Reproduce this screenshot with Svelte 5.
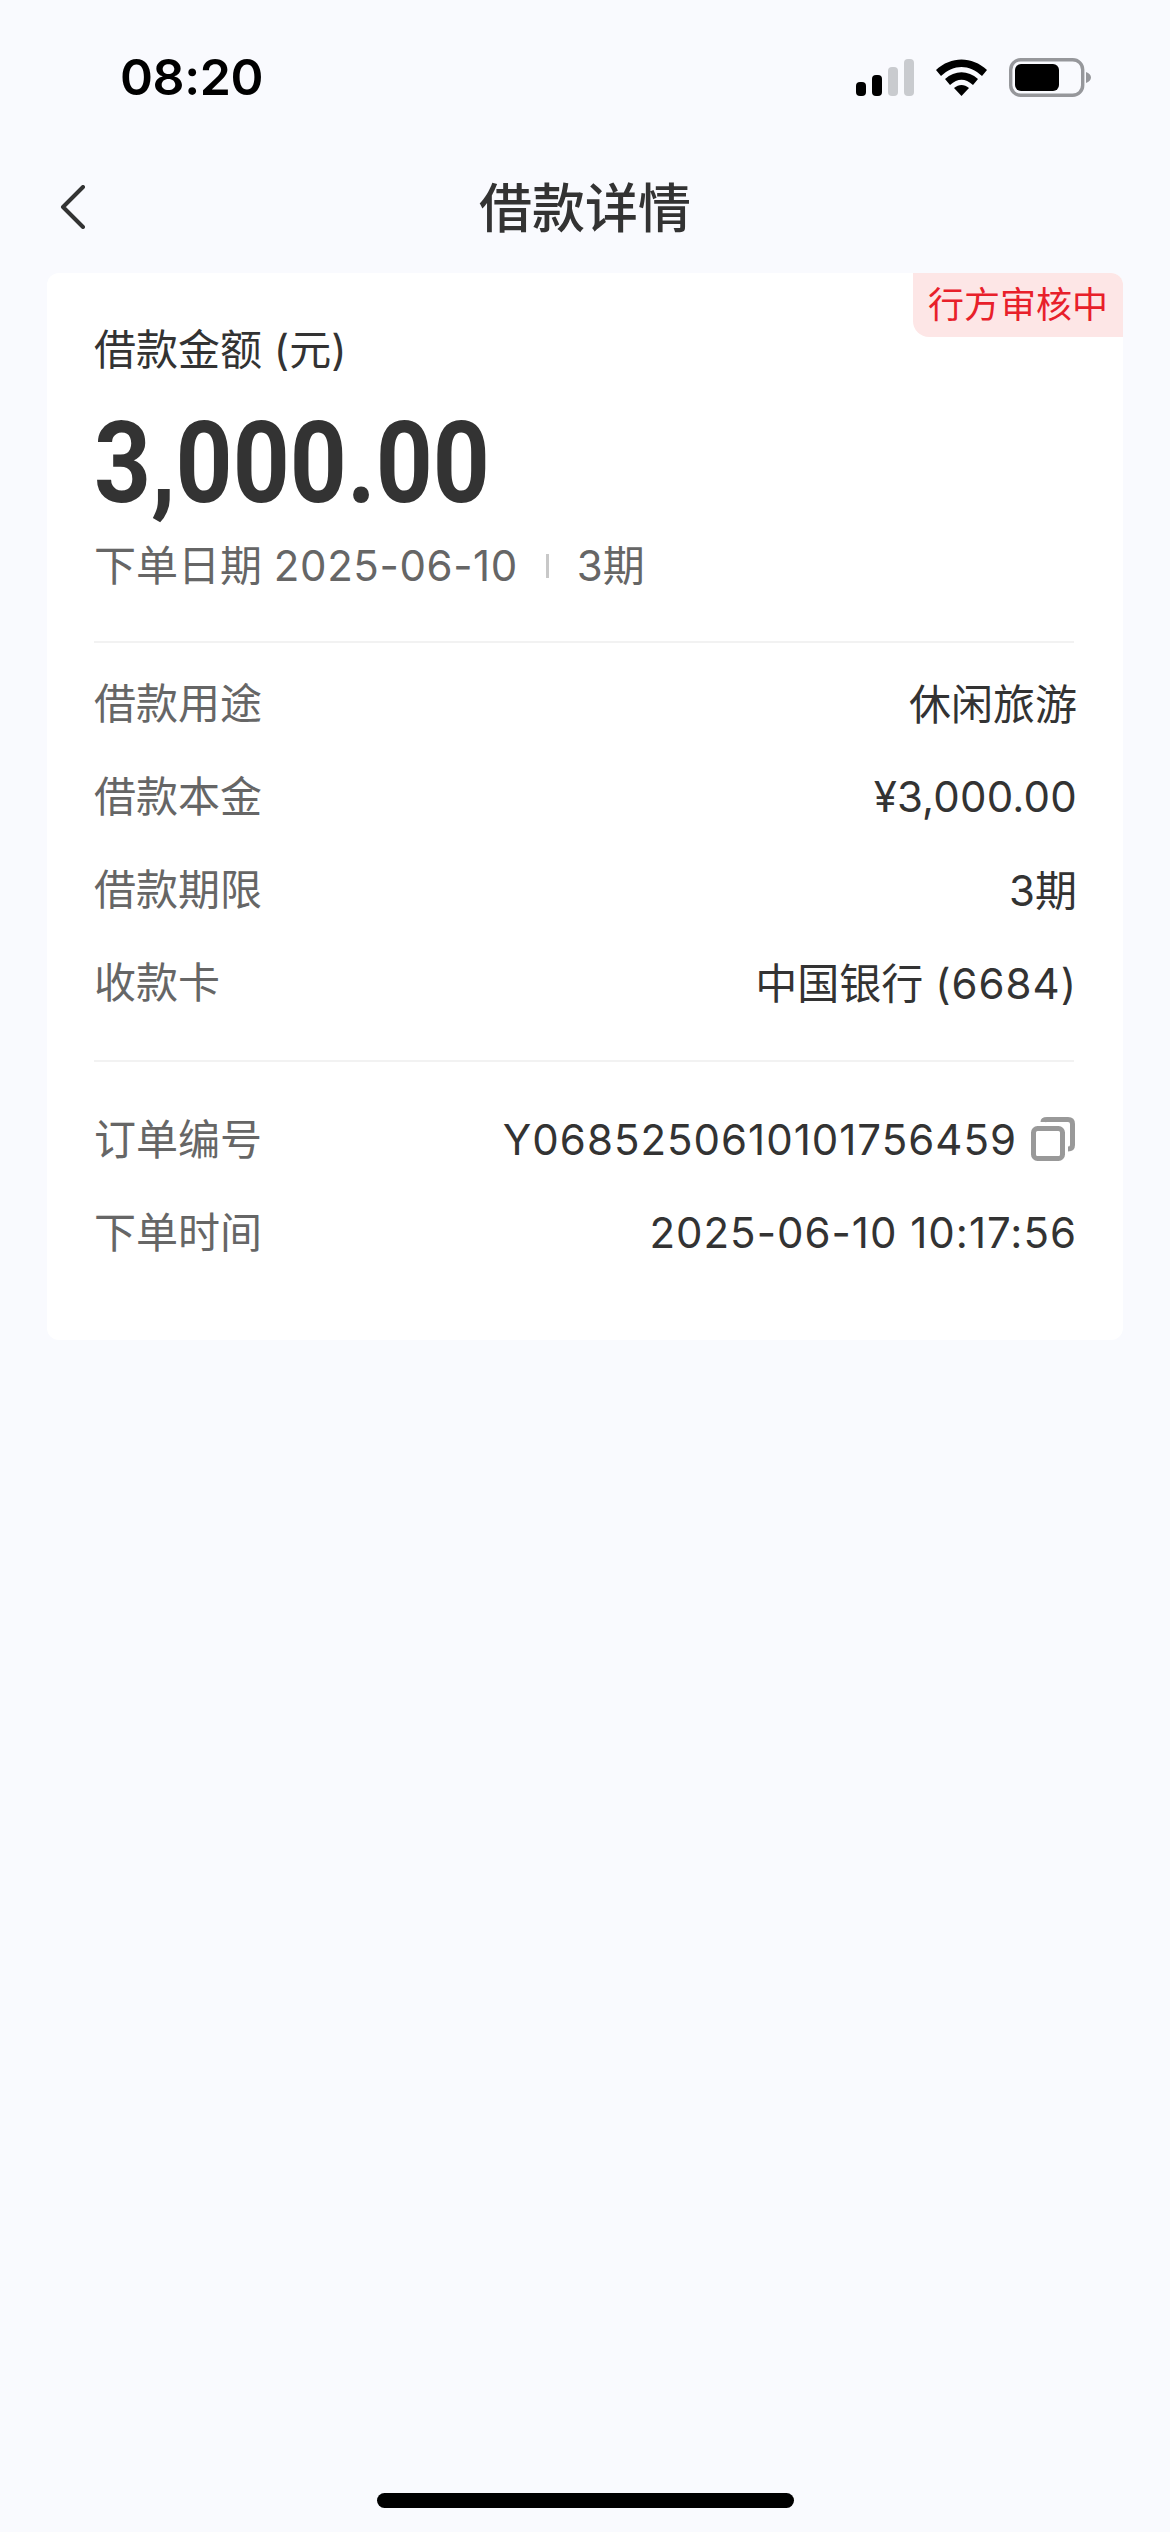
<script>
	const details = [
		{ label: '借款用途', value: '休闲旅游' },
		{ label: '借款本金', num: '¥3,000.00', tight: true },
		{ label: '借款期限', value: '3期' },
		{ label: '收款卡', value: '中国银行 ', num: '(6684)' }
	];
</script>

<div class="page">
	<div class="status-bar">
		<span class="time">08:20</span>
		<div class="status-icons">
			<svg width="58" height="37" viewBox="0 0 58 37">
				<rect x="0" y="23" width="10" height="14" rx="4" fill="#000" />
				<rect x="16" y="16" width="10" height="21" rx="4" fill="#000" />
				<rect x="32" y="8" width="10" height="29" rx="4" fill="#c9cbcf" />
				<rect x="48" y="0" width="10" height="37" rx="4" fill="#c9cbcf" />
			</svg>
			<svg width="51" height="37" viewBox="0 0 51 37">
				<path d="M0 11 C15 -3 36 -3 51 11 L46 17 C33 5 18 5 5 17 Z" fill="#000" />
				<path d="M9 20 C19 11 32 11 42 20 L37 26 C29 19 22 19 14 26 Z" fill="#000" />
				<path d="M18 29 C23 25 28 25 33 29 L25.500 37 Z" fill="#000" />
			</svg>
			<svg width="82" height="39" viewBox="0 0 82 39">
				<rect x="1.700" y="1.700" width="72" height="35.600" rx="10" fill="none" stroke="#96979b" stroke-width="3.400" />
				<rect x="6" y="6" width="44" height="27" rx="6" fill="#000" />
				<path d="M77 14 C80 15 82 17 82 19.500 C82 22 80 24 77 25 Z" fill="#96979b" />
			</svg>
		</div>
	</div>

	<header class="nav">
		<svg class="back" width="26" height="44" viewBox="0 0 26 44">
			<path d="M23 2 L3 22 L23 42" fill="none" stroke="#333" stroke-width="4" stroke-linecap="round" stroke-linejoin="round" />
		</svg>
		<h1>借款详情</h1>
	</header>

	<section class="card">
		<span class="tag">行方审核中</span>
		<div class="amount-label">借款金额 (元)</div>
		<div class="amount">3,000.00</div>
		<div class="meta">
			<span>下单日期 <span class="date">2025-06-10</span></span>
			<i class="meta-sep"></i>
			<span>3期</span>
		</div>

		<div class="group first">
			{#each details as row}
				<div class="row">
					<span class="label">{row.label}</span>
					<span class="value" class:cjk={row.value}>{row.value ?? ''}{#if row.num}<span class="num" class:tight={row.tight}>{row.num}</span>{/if}</span>
				</div>
			{/each}
		</div>

		<div class="group second">
			<div class="row">
				<span class="label">订单编号</span>
				<span class="value with-icon">
					<span class="num">Y0685250610101756459</span>
					<svg width="44" height="44" viewBox="0 0 44 44">
						<rect x="2.500" y="11.500" width="29" height="30" rx="4" fill="none" stroke="#999" stroke-width="5" />
						<path d="M12 5 Q12 2.500 16 2.500 H37 Q41.500 2.500 41.500 7 V28 Q41.500 32 37 32" fill="none" stroke="#999" stroke-width="5" />
					</svg>
				</span>
			</div>
			<div class="row">
				<span class="label">下单时间</span>
				<span class="value num">2025-06-10 10:17:56</span>
			</div>
		</div>
	</section>

	<div class="home-bar"></div>
</div>

<style>
	:global(body) {
		margin: 0;
		background: #f9fafe;
	}

	.page {
		height: 2532px;
		box-sizing: border-box;
		display: flex;
		flex-direction: column;
		background: #f9fafe;
		color: #333;
		font-family: "Inter", "Noto Sans CJK SC", sans-serif;
		overflow: hidden;
	}

	.status-bar {
		height: 78px;
		padding: 38px 79px 2px 120px;
		display: flex;
		justify-content: space-between;
		align-items: center;
	}

	.time {
		font-size: 50px;
		font-weight: 600;
		letter-spacing: -0.4px;
		color: #000;
	}

	.status-icons {
		display: flex;
		align-items: center;
		gap: 22px;
	}

	.nav {
		height: 155px;
		box-sizing: border-box;
		padding-top: 18px;
		display: flex;
		align-items: center;
		justify-content: center;
		position: relative;
	}

	.back {
		position: absolute;
		left: 60px;
		top: 67px;
	}

	h1 {
		margin: 0;
		font-size: 53px;
		font-weight: 500;
		color: #333;
	}

	.card {
		position: relative;
		margin: 0 47px;
		height: 1067px;
		box-sizing: border-box;
		padding: 50px 49px 0 47px;
		background: #fff;
		border-radius: 12px;
	}

	.tag {
		position: absolute;
		top: 0;
		right: 0;
		height: 64px;
		width: 210px;
		display: flex;
		align-items: center;
		justify-content: center;
		background: #fde6e6;
		border-radius: 0 12px 0 16px;
		color: #e8202a;
		font-size: 36px;
		line-height: 1;
	}

	.amount-label {
		font-size: 42px;
		line-height: 54px;
		color: #333;
	}

	.amount {
		margin-top: 16px;
		font-family: "Roboto", sans-serif;
		font-weight: 700;
		font-size: 114px;
		line-height: 140px;
		color: #333;
		transform: scaleX(0.873);
		transform-origin: left center;
	}

	.meta {
		margin-top: 3px;
		display: flex;
		align-items: center;
		font-size: 42px;
		line-height: 60px;
		color: #666;
	}

	.date {
		letter-spacing: 0.6px;
	}

	.meta-sep {
		width: 3px;
		height: 24px;
		margin: 0 28px;
		background: #c8c8c8;
	}

	.num {
		letter-spacing: 1px;
	}

	.num.tight {
		letter-spacing: 0.2px;
	}

	.group {
		border-top: 2px solid #f2f2f2;
		display: flex;
		flex-direction: column;
		gap: 33px;
	}

	.group.first {
		margin-top: 45px;
		padding-top: 30px;
	}

	.group.second {
		margin-top: 48px;
		padding-top: 47px;
	}

	.row {
		display: flex;
		justify-content: space-between;
		align-items: center;
		height: 60px;
		font-size: 42px;
		margin-right: -3px;
	}

	.label {
		color: #666;
		padding-bottom: 5px;
	}

	.value {
		color: #333;
	}

	.value.cjk {
		padding-bottom: 3px;
	}

	.with-icon {
		display: flex;
		align-items: center;
		gap: 14px;
	}

	.with-icon svg {
		margin-right: 2px;
	}

	.home-bar {
		margin: auto 376px 24px 377px;
		height: 15px;
		border-radius: 8px;
		background: #000;
	}
</style>
